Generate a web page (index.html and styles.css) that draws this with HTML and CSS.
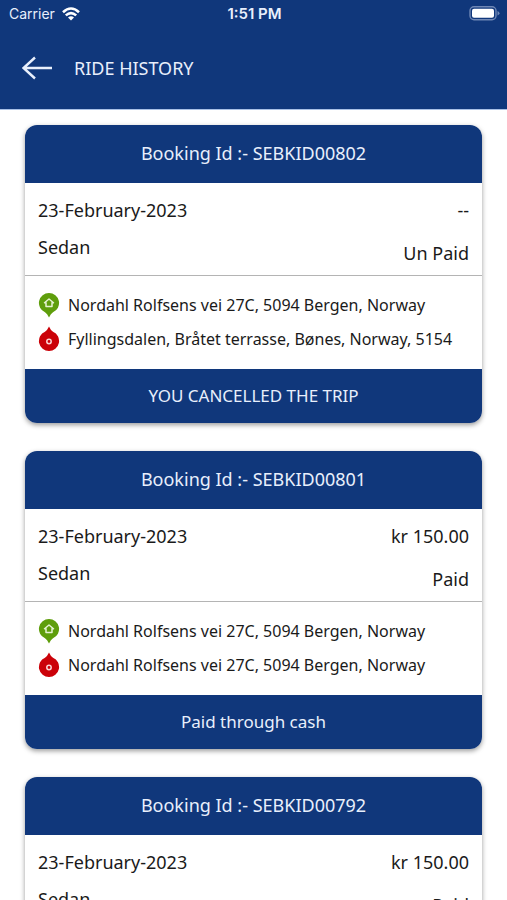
FILE: index.html
```
<!DOCTYPE html>
<html lang="en">
<head>
    <meta charset="UTF-8">
    <meta name="viewport" content="width=device-width, initial-scale=1.0">
    <title>Ride History</title>
    <link rel="stylesheet" href="styles.css">
</head>
<body>
    <!-- shared map pins -->
    <svg class="sprite" aria-hidden="true">
        <symbol id="pin-from" viewBox="0 0 22 26">
            <path fill="#5f9e0c" d="M11 1a10 10 0 0 1 4 19.200Q12.800 21.500 11 25.500 9.200 21.500 7 20.200A10 10 0 0 1 11 1z"/>
            <path fill="none" stroke="#e6f3d2" stroke-width="1.500" stroke-linejoin="round" d="M6.500 10.800 11 7l4.500 3.800H14v3.700H8v-3.700z"/>
        </symbol>
        <symbol id="pin-to" viewBox="0 0 22 26">
            <path fill="#cb0209" d="M11 25a10 10 0 0 1-4-19.200Q9.200 4.500 11 .5q1.800 4 4 5.300A10 10 0 0 1 11 25z"/>
            <circle fill="none" stroke="#fbd5d5" stroke-width="1.500" cx="11" cy="15.500" r="2.200"/>
        </symbol>
    </svg>

    <header class="app-header">
        <div class="status-bar">
            <div class="carrier">
                <span>Carrier</span>
                <svg class="wifi" viewBox="0 0 18 14" aria-hidden="true">
                    <g fill="none" stroke="#fff" stroke-width="2.600">
                        <path d="M1 5.200Q9-2.200 17 5.200"/>
                        <path d="M3.800 8.400q5.200-4.600 10.400 0"/>
                    </g>
                    <path fill="#fff" d="M6 10.400q3-2.400 6 0L9 13.500z"/>
                </svg>
            </div>
            <span class="time">1:51 PM</span>
            <svg class="battery" viewBox="0 0 31 15" aria-hidden="true">
                <rect x="1" y=".7" width="26" height="13" rx="4" fill="none" stroke="#6f87b5" stroke-width="1.400"/>
                <rect x="3" y="2.700" width="22" height="9" rx="2" fill="#fff"/>
                <path d="M28.500 5v4.500q2-.8 2-2.200T28.500 5z" fill="#6f87b5"/>
            </svg>
        </div>
        <div class="title-bar">
            <button class="back" type="button" aria-label="Back">
                <svg viewBox="0 0 30 24" aria-hidden="true">
                    <path d="M13 1.500 1.500 12 13 22.500M1.500 12H30" fill="none" stroke="#e8effc" stroke-width="2.400"/>
                </svg>
            </button>
            <h1>RIDE HISTORY</h1>
        </div>
    </header>

    <main class="rides">
        <article class="ride">
            <h2 class="ride-bar">Booking Id :- SEBKID00802</h2>
            <div class="ride-info">
                <div class="info-left">
                    <span>23-February-2023</span>
                    <span>Sedan</span>
                </div>
                <div class="info-right">
                    <span>--</span>
                    <span>Un Paid</span>
                </div>
            </div>
            <ul class="route">
                <li><svg class="pin"><use href="#pin-from"/></svg>Nordahl Rolfsens vei 27C, 5094 Bergen, Norway</li>
                <li><svg class="pin"><use href="#pin-to"/></svg>Fyllingsdalen, Bråtet terrasse, Bønes, Norway, 5154</li>
            </ul>
            <div class="ride-bar ride-status">YOU CANCELLED THE TRIP</div>
        </article>

        <article class="ride">
            <h2 class="ride-bar">Booking Id :- SEBKID00801</h2>
            <div class="ride-info">
                <div class="info-left">
                    <span>23-February-2023</span>
                    <span>Sedan</span>
                </div>
                <div class="info-right">
                    <span>kr 150.00</span>
                    <span>Paid</span>
                </div>
            </div>
            <ul class="route">
                <li><svg class="pin"><use href="#pin-from"/></svg>Nordahl Rolfsens vei 27C, 5094 Bergen, Norway</li>
                <li><svg class="pin"><use href="#pin-to"/></svg>Nordahl Rolfsens vei 27C, 5094 Bergen, Norway</li>
            </ul>
            <div class="ride-bar ride-status">Paid through cash</div>
        </article>

        <article class="ride">
            <h2 class="ride-bar">Booking Id :- SEBKID00792</h2>
            <div class="ride-info">
                <div class="info-left">
                    <span>23-February-2023</span>
                    <span>Sedan</span>
                </div>
                <div class="info-right">
                    <span>kr 150.00</span>
                    <span>Paid</span>
                </div>
            </div>
        </article>
    </main>
</body>
</html>
```
FILE: styles.css
```
* {
    box-sizing: border-box;
}

body {
    margin: 0;
    background: #fff;
    color: #1a1a1a;
    font-family: "Noto Sans", "Open Sans", sans-serif;
    font-size: 18px;
    line-height: 24px;
}

h1,
h2 {
    margin: 0;
    font-size: inherit;
    font-weight: normal;
}

.sprite {
    display: none;
}

/* header */
.app-header {
    background: #10377b;
    color: #e8effc;
    border-bottom: 1px solid #a9c0e6;
}

.status-bar {
    display: grid;
    grid-template-columns: 1fr auto 1fr;
    align-items: center;
    height: 27px;
    padding: 0 7px 0 9px;
    font-family: Inter, "Liberation Sans", sans-serif;
    font-size: 14px;
}

.carrier {
    display: flex;
    align-items: center;
    gap: 7px;
}

.wifi {
    width: 18px;
    height: 14px;
}

.time {
    font-size: 15px;
    font-weight: 600;
}

.battery {
    justify-self: end;
    width: 31px;
    height: 15px;
}

.title-bar {
    display: flex;
    align-items: center;
    gap: 22px;
    height: 82px;
    padding: 0 22px;
}

.back {
    width: 30px;
    height: 24px;
    padding: 0;
    border: none;
    background: none;
    cursor: pointer;
}

.back svg {
    display: block;
    width: 30px;
    height: 24px;
}

/* ride cards */
.rides {
    display: flex;
    flex-direction: column;
    gap: 28px;
    padding: 15px 25px;
}

.ride {
    border-radius: 12px;
    overflow: hidden;
    background: #fff;
    box-shadow: 0 2px 5px rgba(0, 0, 0, 0.4);
}

.ride-bar {
    padding: 16px 12px 18px;
    background: #10377b;
    color: #e8effc;
    text-align: center;
}

.ride-status {
    padding: 15px 12px;
    font-size: 17px;
}

.ride-info {
    display: flex;
    justify-content: space-between;
    padding: 15px 13px 10px;
    border-bottom: 1px solid #b4b4b4;
}

.info-left,
.info-right {
    display: flex;
    flex-direction: column;
    gap: 13px;
}

.info-right {
    gap: 19px;
    text-align: right;
}

.route {
    display: flex;
    flex-direction: column;
    gap: 10px;
    margin: 0;
    padding: 17px 13px 18px;
    list-style: none;
    font-size: 16px;
}

.route li {
    display: flex;
    align-items: center;
    gap: 8px;
}

.pin {
    flex: none;
    width: 22px;
    height: 26px;
    margin: -1px 0;
}
```
